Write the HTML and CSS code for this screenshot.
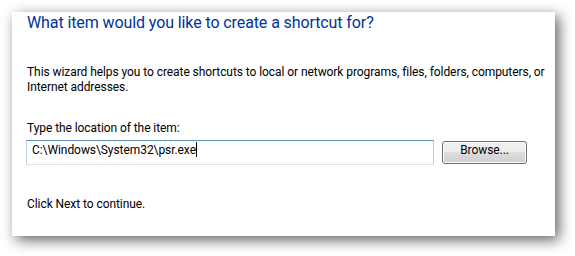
FILE: index.html
```html
<!DOCTYPE html>
<html>
<head>
<meta charset="utf-8">
<link rel="stylesheet" href="styles.css">
</head>
<body>
<div class="panel">
  <h1 class="title">What item would you like to create a shortcut for?</h1>
  <p class="intro">This wizard helps you to create shortcuts to local or network programs, files, folders, computers, or<br>Internet addresses.</p>
  <label class="label">Type the location of the item:</label>
  <div class="row">
    <div class="input">C:\Windows\System32\psr.exe<span class="caret"></span></div>
    <div class="button">Browse...</div>
  </div>
  <p class="next">Click Next to continue.</p>
</div>
</body>
</html>
```
FILE: styles.css
```css
html, body {
  margin: 0;
  padding: 0;
  background: #ffffff;
}
body {
  width: 575px;
  height: 256px;
  padding: 12px 0 0 12px;
  box-sizing: border-box;
  overflow: hidden;
  font-family: Roboto, "Liberation Sans", sans-serif;
  font-size: 12px;
  letter-spacing: -0.07px;
  color: #000;
}
.panel {
  width: 543px;
  height: 224px;
  background: #fff;
  box-shadow: 4px 4px 13px rgba(0,0,0,0.62);
  padding: 0 0 0 15px;
  box-sizing: border-box;
}
.title {
  margin: 0;
  font-weight: normal;
  font-size: 16px;
  line-height: 22px;
  letter-spacing: -0.1px;
  color: #003399;
}
.intro {
  margin: 31px 0 0 0;
  line-height: 15px;
  white-space: nowrap;
}
.label {
  display: block;
  margin-top: 26px;
  line-height: 15px;
}
.row {
  display: flex;
  margin-top: 4px;
  margin-left: -1px;
  align-items: flex-start;
}
.input {
  width: 408px;
  height: 25px;
  box-sizing: border-box;
  border: 1px solid #b8d0e8;
  border-top-color: #5a8fc2;
  border-bottom-color: #d9e5f1;
  padding: 1px 0 0 5px;
  line-height: 16px;
}
.caret {
  display: inline-block;
  width: 1px;
  height: 15px;
  margin-left: 0;
  background: #000;
  vertical-align: -3px;
}
.button {
  margin-left: 8px;
  margin-top: 1px;
  width: 85px;
  height: 23px;
  box-sizing: border-box;
  border: 1px solid #707070;
  border-radius: 3px;
  background: linear-gradient(#f2f2f2 0%, #ebebeb 50%, #dddddd 50%, #cfcfcf 100%);
  box-shadow: inset 0 0 0 1px #fbfbfb;
  text-align: center;
  line-height: 16px;
}
.next {
  margin: 32px 0 0 0;
  line-height: 15px;
}
```
